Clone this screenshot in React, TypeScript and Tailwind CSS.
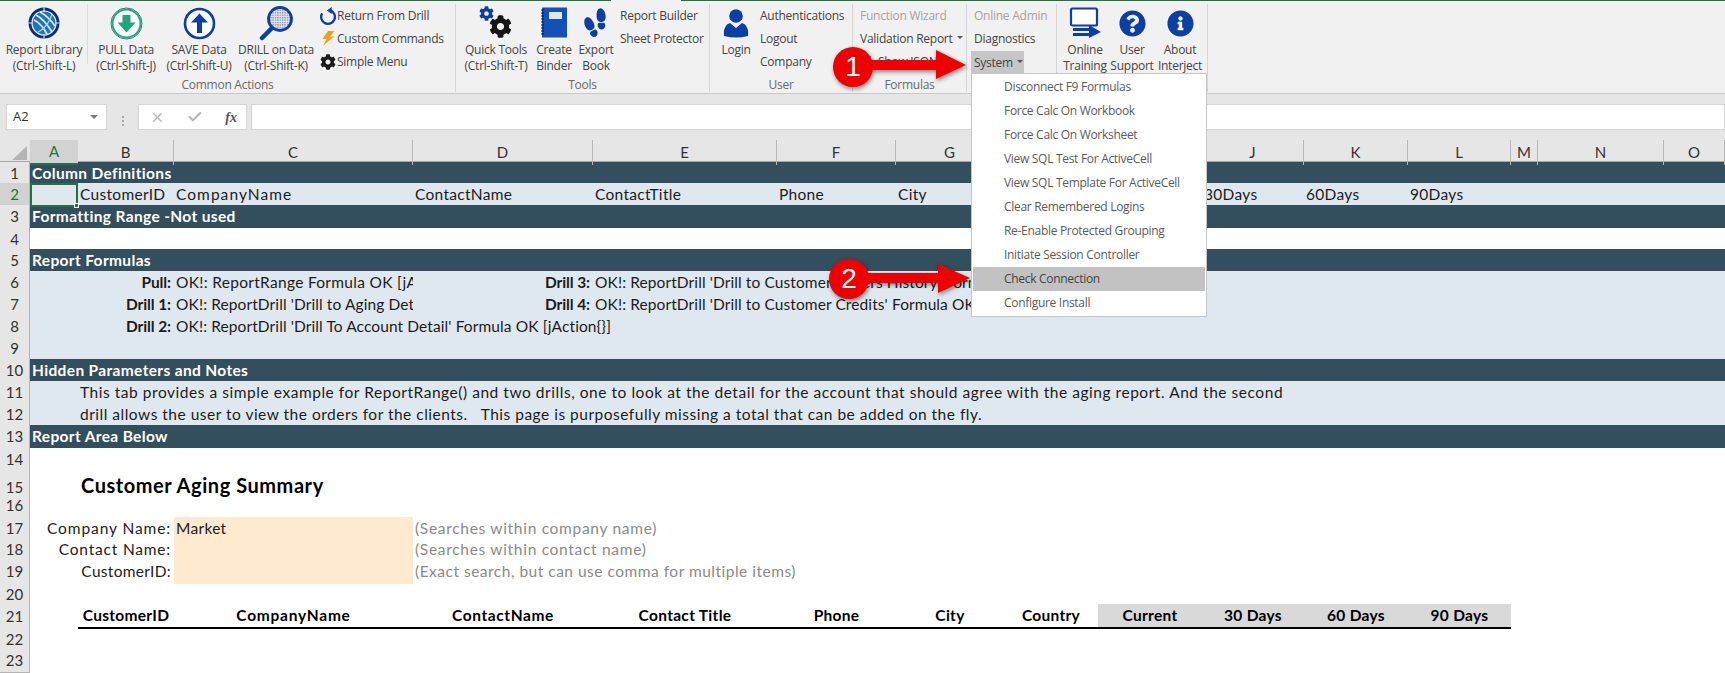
import React from "react";
import { FaCog, FaInfoCircle, FaQuestionCircle } from "react-icons/fa";
import { IoFootsteps } from "react-icons/io5";
import { Check, X } from "lucide-react";

const COLS =
  "grid grid-cols-[30px_48px_96px_239px_180px_184px_119px_108px_94px_104px_102px_104px_103px_27px_126px_61px]";
const SHEET_FONT = "font-['Lato','Open_Sans',sans-serif] text-[15.5px] tracking-[0.3px] text-[#1c1c1c]";

const GlobeIcon = () => (
  <svg width="32" height="32" viewBox="0 0 32 32">
    <circle cx="16" cy="16" r="15.5" fill="#0a2f78" />
    <circle cx="16" cy="16" r="12.6" fill="#e9f2f9" />
    <circle cx="16" cy="16" r="11.4" fill="#1f74b6" />
    <path d="M8 8 Q16 12 24 25 M6 13 Q13 16 19 27 M12 5 Q20 9 27 19" stroke="#d8ebf8" strokeWidth="1.7" fill="none" />
    <path d="M16 0.5 V5 M16 27 V31.5 M0.5 16 H5 M27 16 H31.5" stroke="#cfe2f2" strokeWidth="1.2" fill="none" />
    <path d="M9 26 Q21 19 24 7" stroke="#9ed0f0" strokeWidth="1.2" fill="none" />
  </svg>
);

const PullIcon = () => (
  <svg width="33" height="33" viewBox="0 0 33 33">
    <circle cx="16.5" cy="16.5" r="15.5" fill="#fff" stroke="#2f6f63" strokeWidth="1" />
    <circle cx="16.5" cy="16.5" r="14" fill="#fff" stroke="#25a884" strokeWidth="2" />
    <path d="M12.5 8 H20.5 V15.5 H25.5 L16.5 25.5 L7.5 15.5 H12.5 Z" fill="#1fa67f" />
  </svg>
);

const SaveIcon = () => (
  <svg width="33" height="33" viewBox="0 0 33 33">
    <circle cx="16.5" cy="16.5" r="14.5" fill="#fff" stroke="#0b3fa3" strokeWidth="2.6" />
    <path d="M14 26 V15.5 H8 L16.5 6.5 L25 15.5 H19 V26 Z" fill="#0b3fa3" />
  </svg>
);

const DrillIcon = () => (
  <svg width="36" height="36" viewBox="0 0 36 36">
    <defs>
      <pattern id="lens" width="2.4" height="2.4" patternUnits="userSpaceOnUse">
        <rect width="2.4" height="2.4" fill="#e4e7ee" />
        <rect width="1.3" height="1.3" fill="#7d879c" />
      </pattern>
    </defs>
    <circle cx="22" cy="14" r="11.5" fill="url(#lens)" stroke="#0b3fa3" strokeWidth="2.8" />
    <path d="M14 23 L4 33" stroke="#0b3fa3" strokeWidth="4.5" strokeLinecap="round" />
  </svg>
);

const ReturnIcon = () => (
  <svg width="18" height="18" viewBox="0 0 17 17">
    <path d="M10.5 3.2 A6.5 6.5 0 1 1 3 6" fill="none" stroke="#0b3fa3" strokeWidth="2.2" />
    <path d="M12 0 L7.5 3.4 L12 6.5 Z" fill="#0b3fa3" />
  </svg>
);

const BoltIcon = () => (
  <svg width="14" height="15" viewBox="0 0 14 15">
    <path d="M7 0 H13.5 L9 5.5 H13 L2 15 L5.5 8 H1.5 Z" fill="#eaa21b" />
  </svg>
);

const QuickToolsIcon = () => (
  <div className="relative w-[34px] h-[34px]">
    <FaCog className="absolute left-0 top-0 text-[#0b3fa3]" size={15} />
    <FaCog className="absolute left-[10px] top-[9px] text-[#151515]" size={23} />
  </div>
);

const BinderIcon = () => (
  <svg width="28" height="32" viewBox="0 0 28 32">
    <rect x="2" y="0.5" width="25" height="30" fill="#1450b8" />
    <rect x="9" y="5" width="13" height="7" fill="#dfe9f5" />
    <path d="M1 3 H4 M1 6 H4 M1 9 H4 M1 12 H4 M1 15 H4 M1 18 H4 M1 21 H4 M1 24 H4 M1 27 H4" stroke="#111" strokeWidth="1" />
  </svg>
);

const UserIcon = () => (
  <svg width="26" height="30" viewBox="0 0 26 30">
    <circle cx="13" cy="8" r="6.8" fill="#0b3fa3" />
    <path d="M1 28 Q0 17 7 15 L13 20 L19 15 Q26 17 25 28 Q13 31 1 28 Z" fill="#0b3fa3" />
  </svg>
);

const TrainingIcon = () => (
  <svg width="32" height="32" viewBox="0 0 32 32">
    <rect x="2" y="1.5" width="26" height="17" rx="1.5" fill="#fff" stroke="#0b3fa3" strokeWidth="2.2" />
    <path d="M9 21 H20 V24 H4 V21 Z M4 26 H20 V29 H4 Z" fill="#0b3fa3" />
    <path d="M20 18 L32 25 L20 31 Z" fill="#0b3fa3" />
  </svg>
);

const RibbonButton = ({ width, icon, lines }: { width: string; icon: React.ReactNode; lines: string[] }) => (
  <div className={`${width} flex flex-col items-center shrink-0`}>
    <div className="h-[38px] flex items-center justify-center">{icon}</div>
    {lines.map((line) => (
      <div key={line} className="h-[16px] leading-[16px] whitespace-nowrap">
        {line}
      </div>
    ))}
  </div>
);

const SmallItem = ({ icon, children, muted }: { icon?: React.ReactNode; children: React.ReactNode; muted?: boolean }) => (
  <div className={`h-[23px] flex items-center whitespace-nowrap ${muted ? "text-[#a3a3a3]" : ""}`}>
    {icon && <span className="w-[19px] flex justify-center shrink-0">{icon}</span>}
    {children}
  </div>
);

const Caret = () => (
  <span className="inline-block ml-[4px] mb-[2px] border-x-[3px] border-x-transparent border-t-[3px] border-t-[#555]" />
);

const RibbonGroup = ({ width, label, children }: { width: string; label?: string; children: React.ReactNode }) => (
  <div className={`${width} shrink-0 h-[88px] flex flex-col border-r border-[#d6d6d6]`}>
    <div className="flex h-[74px]">{children}</div>
    <div className="h-[14px] leading-[14px] text-center text-[#6a6a6a]">{label}</div>
  </div>
);

const Ribbon = () => (
  <div className="relative h-[94px] bg-[#f1f1f1] border-b border-[#c9c9c9] border-t border-t-[#217346] pt-[3px] flex font-['Open_Sans',sans-serif] text-[12px] tracking-[-0.25px] text-[#444]">
    <div className="absolute left-[611px] w-[70px] -top-px h-px bg-[#f1f1f1]" />
    <RibbonGroup width="w-[456px]" label="Common Actions">
      <div className="w-[88px] shrink-0 h-[60px] border-r border-[#dcdcdc]">
        <RibbonButton width="w-[88px]" icon={<GlobeIcon />} lines={["Report Library", "(Ctrl-Shift-L)"]} />
      </div>
      <RibbonButton width="w-[76px]" icon={<PullIcon />} lines={["PULL Data", "(Ctrl-Shift-J)"]} />
      <RibbonButton width="w-[70px]" icon={<SaveIcon />} lines={["SAVE Data", "(Ctrl-Shift-U)"]} />
      <RibbonButton width="w-[84px]" icon={<DrillIcon />} lines={["DRILL on Data", "(Ctrl-Shift-K)"]} />
      <div className="flex flex-col">
        <SmallItem icon={<ReturnIcon />}>Return From Drill</SmallItem>
        <SmallItem icon={<BoltIcon />}>Custom Commands</SmallItem>
        <SmallItem icon={<FaCog className="text-[#1a1a1a]" size={16} />}>Simple Menu</SmallItem>
      </div>
    </RibbonGroup>
    <RibbonGroup width="w-[254px]" label="Tools">
      <div className="w-[4px]" />
      <RibbonButton width="w-[72px]" icon={<QuickToolsIcon />} lines={["Quick Tools", "(Ctrl-Shift-T)"]} />
      <RibbonButton width="w-[44px]" icon={<BinderIcon />} lines={["Create", "Binder"]} />
      <RibbonButton width="w-[40px]" icon={<IoFootsteps className="text-[#0b3fa3] -rotate-[15deg]" size={28} />} lines={["Export", "Book"]} />
      <div className="flex flex-col pl-[4px]">
        <SmallItem>Report Builder</SmallItem>
        <SmallItem>Sheet Protector</SmallItem>
      </div>
    </RibbonGroup>
    <RibbonGroup width="w-[143px]" label="User">
      <div className="w-[6px]" />
      <RibbonButton width="w-[40px]" icon={<UserIcon />} lines={["Login"]} />
      <div className="flex flex-col pl-[4px]">
        <SmallItem>Authentications</SmallItem>
        <SmallItem>Logout</SmallItem>
        <SmallItem>Company</SmallItem>
      </div>
    </RibbonGroup>
    <RibbonGroup width="w-[114px]" label="Formulas">
      <div className="flex flex-col pl-[7px]">
        <SmallItem muted>Function Wizard</SmallItem>
        <SmallItem>
          Validation Report
          <Caret />
        </SmallItem>
        <SmallItem>
          <span className="w-[11px] h-[11px] border border-[#888] bg-white mr-[7px]" />
          Show JSON
        </SmallItem>
      </div>
    </RibbonGroup>
    <RibbonGroup width="w-[90px]">
      <div className="flex flex-col pl-[4px]">
        <div className="pl-[3px]">
          <SmallItem muted>Online Admin</SmallItem>
          <SmallItem>Diagnostics</SmallItem>
        </div>
        <div className="mt-px h-[23px] w-[53px] pl-[3px] flex items-center bg-[#c6c6c6]">
          System
          <Caret />
        </div>
      </div>
    </RibbonGroup>
    <RibbonGroup width="w-[151px]">
      <div className="w-[4px]" />
      <RibbonButton width="w-[48px]" icon={<TrainingIcon />} lines={["Online", "Training"]} />
      <RibbonButton width="w-[46px]" icon={<FaQuestionCircle className="text-[#0b3fa3]" size={27} />} lines={["User", "Support"]} />
      <RibbonButton width="w-[50px]" icon={<FaInfoCircle className="text-[#0b3fa3]" size={27} />} lines={["About", "Interject"]} />
    </RibbonGroup>
  </div>
);

const FormulaBar = () => (
  <div className="h-[46px] bg-[#e6e6e6] pt-[10px] flex font-['Open_Sans',sans-serif]">
    <div className="ml-[6px] w-[101px] h-[26px] bg-white border border-[#d4d4d4] flex items-center justify-between px-[6px] text-[13px] text-[#333]">
      A2
      <span className="border-x-[4px] border-x-transparent border-t-[4px] border-t-[#777] mr-[2px]" />
    </div>
    <div className="w-[31px] flex justify-center items-center pb-[2px]">
      <span className="flex flex-col gap-[2px]">
        <i className="w-[2px] h-[2px] bg-[#aaa]" />
        <i className="w-[2px] h-[2px] bg-[#aaa]" />
        <i className="w-[2px] h-[2px] bg-[#aaa]" />
      </span>
    </div>
    <div className="w-[109px] h-[26px] bg-white border border-[#d4d4d4] flex items-center justify-between pl-[11px] pr-[9px]">
      <X size={15} className="text-[#b5b5b5]" strokeWidth={2.2} />
      <Check size={16} className="text-[#b5b5b5]" strokeWidth={3} />
      <span className="font-['Liberation_Serif',serif] italic font-bold text-[14px] text-[#555]">fx</span>
    </div>
    <div className="ml-[4px] flex-1 h-[26px] bg-white border border-[#d4d4d4]" />
  </div>
);

const columnLetters = ["A", "B", "C", "D", "E", "F", "G", "H", "I", "J", "K", "L", "M", "N", "O"];

const ColumnHeaders = () => (
  <div className={`${COLS} h-[22px] bg-[#e6e6e6] border-b border-[#a6a6a6] text-[15px] text-[#333] font-['Lato',sans-serif]`}>
    <div className="flex items-center justify-end pr-[3px] pt-[2px]">
      <svg width="15" height="14" viewBox="0 0 15 14">
        <path d="M15 0 V14 H0 Z" fill="#b4b4b4" />
      </svg>
    </div>
    {columnLetters.map((letter) => (
      <div
        key={letter}
        className={
          letter === "A"
            ? "flex items-center justify-center bg-[#d2d2d2] border-b-2 border-[#217346] text-[#217346]"
            : "flex items-center justify-center border-r border-[#b8b8b8]"
        }
      >
        {letter}
      </div>
    ))}
  </div>
);

const Row = ({
  num,
  height,
  className,
  active,
  children,
}: {
  num: number;
  height: string;
  className?: string;
  active?: boolean;
  children?: React.ReactNode;
}) => (
  <div className={`${COLS} ${height} ${className ?? "bg-white"}`}>
    <div
      className={`col-start-1 row-start-1 flex items-center justify-center border-b border-r border-[#b4b4b4] text-[15px] font-normal tracking-normal ${
        active ? "bg-[#d2d2d2] text-[#217346]" : "bg-[#e6e6e6] text-[#333]"
      }`}
    >
      {num}
    </div>
    {children}
  </div>
);

const Cell = ({ className, children }: { className: string; children?: React.ReactNode }) => (
  <div className={`row-start-1 flex items-center whitespace-nowrap min-w-0 ${className}`}>{children}</div>
);

const Banner = ({ num, height, title }: { num: number; height: string; title: string }) => (
  <Row num={num} height={height} className="bg-[#334e5c]">
    <Cell className="col-start-2 pl-[2px] font-bold text-white tracking-[0.35px]">{title}</Cell>
  </Row>
);

const Sheet = () => (
  <div className={SHEET_FONT}>
    <Banner num={1} height="h-[21px]" title="Column Definitions" />
    <Row num={2} height="h-[22px]" className="bg-[#e0e8ef]" active>
      <Cell className="col-start-2 relative border-2 border-[#217346]">
        <span className="absolute -right-[3px] -bottom-[3px] w-[5px] h-[5px] bg-[#217346] border border-white" />
      </Cell>
      <Cell className="col-start-3 pl-[2px]">CustomerID</Cell>
      <Cell className="col-start-4 pl-[2px] tracking-[1.05px]">CompanyName</Cell>
      <Cell className="col-start-5 pl-[2px]">ContactName</Cell>
      <Cell className="col-start-6 pl-[2px]">ContactTitle</Cell>
      <Cell className="col-start-7 pl-[2px]">Phone</Cell>
      <Cell className="col-start-8 pl-[2px]">City</Cell>
      <Cell className="col-start-11 pl-[2px]">30Days</Cell>
      <Cell className="col-start-12 pl-[2px]">60Days</Cell>
      <Cell className="col-start-13 pl-[2px]">90Days</Cell>
    </Row>
    <Banner num={3} height="h-[23px]" title="Formatting Range -Not used" />
    <Row num={4} height="h-[21px]" />
    <Banner num={5} height="h-[22px]" title="Report Formulas" />
    <Row num={6} height="h-[22px]" className="bg-[#e0e8ef]">
      <Cell className="col-start-3 justify-end pr-[3px] font-bold tracking-[-0.1px]">Pull:</Cell>
      <Cell className="col-start-4 pl-[2px] overflow-hidden tracking-[0.3px]">OK!: ReportRange Formula OK [jAction&#123;&#125;]</Cell>
      <Cell className="col-start-5 justify-end pr-[3px] font-bold tracking-[-0.1px]">Drill 3:</Cell>
      <Cell className="col-start-6 pl-[2px] tracking-[0.1px]">OK!: ReportDrill 'Drill to Customer Orders History' Formula OK</Cell>
    </Row>
    <Row num={7} height="h-[22px]" className="bg-[#e0e8ef]">
      <Cell className="col-start-3 justify-end pr-[3px] font-bold tracking-[-0.1px]">Drill 1:</Cell>
      <Cell className="col-start-4 pl-[2px] overflow-hidden tracking-[0.1px]">OK!: ReportDrill 'Drill to Aging Detail' Formula OK</Cell>
      <Cell className="col-start-5 justify-end pr-[3px] font-bold tracking-[-0.1px]">Drill 4:</Cell>
      <Cell className="col-start-6 pl-[2px] tracking-[0.1px]">OK!: ReportDrill 'Drill to Customer Credits' Formula OK</Cell>
    </Row>
    <Row num={8} height="h-[22px]" className="bg-[#e0e8ef]">
      <Cell className="col-start-3 justify-end pr-[3px] font-bold tracking-[-0.1px]">Drill 2:</Cell>
      <Cell className="col-start-4 pl-[2px] tracking-[0.1px]">OK!: ReportDrill 'Drill To Account Detail' Formula OK [jAction&#123;&#125;]</Cell>
    </Row>
    <Row num={9} height="h-[22px]" className="bg-[#e0e8ef]" />
    <Banner num={10} height="h-[22px]" title="Hidden Parameters and Notes" />
    <Row num={11} height="h-[22px]" className="bg-[#e0e8ef]">
      <Cell className="col-start-3 pl-[2px] tracking-[0.54px]">
        This tab provides a simple example for ReportRange() and two drills, one to look at the detail for the account that should agree with the aging report. And the second
      </Cell>
    </Row>
    <Row num={12} height="h-[22px]" className="bg-[#e0e8ef]">
      <Cell className="col-start-3 pl-[2px] whitespace-pre tracking-[0.5px]">
        drill allows the user to view the orders for the clients.   This page is purposefully missing a total that can be added on the fly.
      </Cell>
    </Row>
    <Banner num={13} height="h-[23px]" title="Report Area Below" />
    <Row num={14} height="h-[22px]" />
    <Row num={15} height="h-[24px]">
      <Cell className="col-start-3 pl-[3px] pb-[6px] font-bold text-[20px] tracking-[0.55px] text-black">Customer Aging Summary</Cell>
    </Row>
    <Row num={16} height="h-[23px]" />
    <Row num={17} height="h-[21px]">
      <Cell className="col-start-3 justify-end pr-[3px] tracking-[0.9px]">Company Name:</Cell>
      <Cell className="col-start-4 pl-[2px] bg-[#fdeacf]">Market</Cell>
      <Cell className="col-start-5 pl-[2px] text-[#8a8a8a] tracking-[0.7px]">(Searches within company name)</Cell>
    </Row>
    <Row num={18} height="h-[22px]">
      <Cell className="col-start-3 justify-end pr-[3px] tracking-[0.8px]">Contact Name:</Cell>
      <Cell className="col-start-4 bg-[#fdeacf]" />
      <Cell className="col-start-5 pl-[2px] text-[#8a8a8a] tracking-[0.7px]">(Searches within contact name)</Cell>
    </Row>
    <Row num={19} height="h-[23px]">
      <Cell className="col-start-3 justify-end pr-[3px]">CustomerID:</Cell>
      <Cell className="col-start-4 bg-[#fdeacf]" />
      <Cell className="col-start-5 pl-[2px] text-[#8a8a8a] tracking-[0.5px]">(Exact search, but can use comma for multiple items)</Cell>
    </Row>
    <Row num={20} height="h-[21px]" />
    <Row num={21} height="h-[24px]" className="bg-white font-bold text-black">
      <Cell className="col-start-3 justify-center border-b-2 border-black">CustomerID</Cell>
      <Cell className="col-start-4 justify-center border-b-2 border-black tracking-[0.75px]">CompanyName</Cell>
      <Cell className="col-start-5 justify-center border-b-2 border-black tracking-[0.6px]">ContactName</Cell>
      <Cell className="col-start-6 justify-center border-b-2 border-black">Contact Title</Cell>
      <Cell className="col-start-7 justify-center border-b-2 border-black">Phone</Cell>
      <Cell className="col-start-8 justify-center border-b-2 border-black">City</Cell>
      <Cell className="col-start-9 justify-center border-b-2 border-black">Country</Cell>
      <Cell className="col-start-10 justify-center border-b-2 border-black bg-[#d9d9d9]">Current</Cell>
      <Cell className="col-start-11 justify-center border-b-2 border-black bg-[#d9d9d9]">30 Days</Cell>
      <Cell className="col-start-12 justify-center border-b-2 border-black bg-[#d9d9d9]">60 Days</Cell>
      <Cell className="col-start-13 justify-center border-b-2 border-black bg-[#d9d9d9]">90 Days</Cell>
    </Row>
    <Row num={22} height="h-[21px]" />
    <Row num={23} height="h-[22px]" />
    <div className="w-[30px] h-[4px] bg-[#e6e6e6] border-r border-[#b4b4b4]" />
  </div>
);

const menuItems = [
  "Disconnect F9 Formulas",
  "Force Calc On Workbook",
  "Force Calc On Worksheet",
  "View SQL Test For ActiveCell",
  "View SQL Template For ActiveCell",
  "Clear Remembered Logins",
  "Re-Enable Protected Grouping",
  "Initiate Session Controller",
  "Check Connection",
  "Configure Install",
];

const SystemMenu = () => (
  <div className="absolute left-[971px] top-[73px] w-[236px] h-[244px] bg-white border border-[#c6c6c6] p-px font-['Open_Sans',sans-serif] text-[12px] tracking-[-0.3px] text-[#5a5a5a]">
    {menuItems.map((item) => (
      <div
        key={item}
        className={`h-[24px] pl-[31px] flex items-center ${item === "Check Connection" ? "bg-[#c2c2c2] text-[#444]" : ""}`}
      >
        {item}
      </div>
    ))}
  </div>
);

const Callout = ({ pos, num, path }: { pos: string; num: string; path: string }) => (
  <div className={`absolute w-[145px] h-[42px] ${pos}`}>
    <svg width="145" height="42" viewBox="0 0 145 42" className="drop-shadow-[1px_2px_2px_rgba(0,0,0,0.45)]">
      <path d={path} fill="#ee0000" />
      <circle cx="20" cy="20" r="20" fill="#ee0000" />
    </svg>
    <span className="absolute left-0 top-0 w-[40px] h-[40px] flex items-center justify-center text-white text-[28px] font-['Liberation_Sans',sans-serif]">
      {num}
    </span>
  </div>
);

export default function App() {
  return (
    <div className="relative w-[1725px] h-[673px] overflow-hidden bg-white">
      <Ribbon />
      <FormulaBar />
      <ColumnHeaders />
      <Sheet />
      <SystemMenu />
      <Callout pos="left-[833px] top-[47px]" num="1" path="M30 13 H103 V3 L133 18 L103 32 V23 H30 Z" />
      <Callout pos="left-[829px] top-[259px]" num="2" path="M30 14 H109 V5 L141 19 L109 34 V24 H30 Z" />
    </div>
  );
}
